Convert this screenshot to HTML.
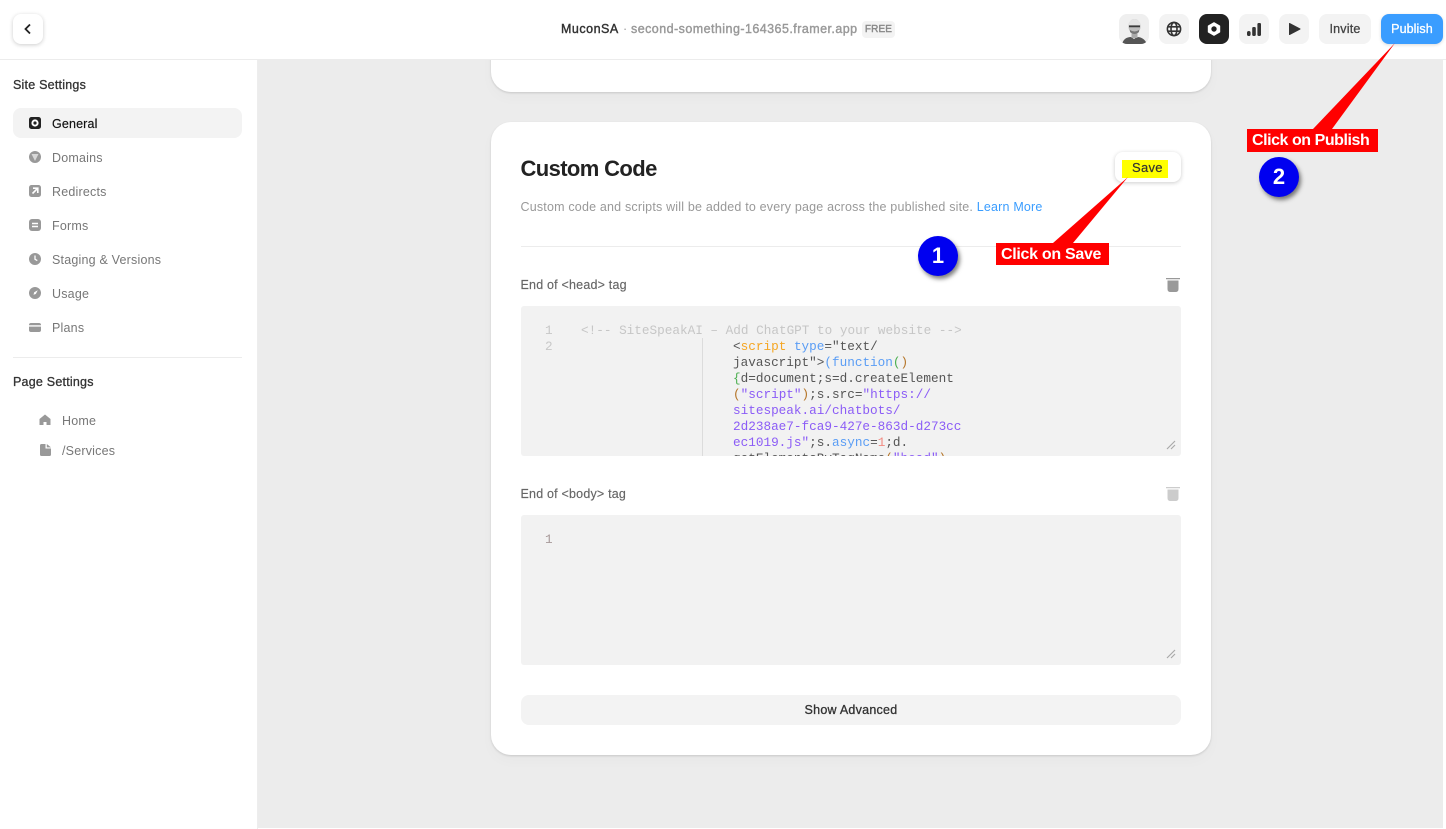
<!DOCTYPE html>
<html><head><meta charset="utf-8"><title>Site Settings</title>
<style>
html,body{margin:0;padding:0;width:1446px;height:829px;overflow:hidden;background:#fff;font-family:"Liberation Sans",sans-serif}
.a{position:absolute}
.t{position:absolute;white-space:nowrap;line-height:16px;font-size:12.5px;letter-spacing:.2px}
.md{-webkit-text-stroke:.3px currentColor}
.nav{color:#777}
.btn{position:absolute;top:14px;width:30px;height:30px;border-radius:8px;background:#f3f3f3}
.btn svg,.ic{position:absolute}
.card{position:absolute;left:491px;width:720px;background:#fff;border-radius:20px;box-shadow:0 1px 2px rgba(0,0,0,.14),0 6px 14px rgba(0,0,0,.025)}
.code{position:absolute;left:521px;width:660px;height:150px;background:#f2f2f2;border-radius:3px;overflow:hidden}
.m{position:absolute;font-family:"Liberation Mono",monospace;font-size:12.7px;line-height:16px;white-space:pre;color:#555}
.call{position:absolute;background:#f00;color:#fff;font-family:"Liberation Sans",sans-serif;font-weight:bold;font-size:16px;line-height:23px;white-space:nowrap}
.bub{position:absolute;width:40px;height:40px;border-radius:50%;background:#0000f0;color:#fff;text-align:center;font:bold 22px/40px "Liberation Sans",sans-serif;box-shadow:2px 3px 4px rgba(0,0,0,.5)}
.o{color:#f5a623}.b{color:#5a9df5}.p{color:#8b5cf6}.r{color:#f28b82}.g{color:#4caf50}.n{color:#b5762a}
</style></head><body>
<div class="a" style="left:258px;top:60px;width:1185px;height:768px;background:#ececec"></div>

<!-- header -->
<div class="a" style="left:0;top:0;width:1446px;height:59px;background:#fff;border-bottom:1px solid #ececec"></div>
<div class="a" style="left:13px;top:14px;width:30px;height:30px;border-radius:8px;background:#fff;box-shadow:0 1px 4px rgba(0,0,0,.2)"></div>
<svg class="a" style="left:22px;top:23px" width="12" height="12" viewBox="0 0 12 12"><path d="M8 1.500 3.500 6 8 10.500" fill="none" stroke="#222" stroke-width="1.800"/></svg>
<div class="t" style="left:561px;top:21px;color:#333;letter-spacing:.5px;-webkit-text-stroke:.4px #333">MuconSA</div>
<div class="t" style="left:623px;top:21px;color:#999">·</div>
<div class="t" style="left:631px;top:21px;color:#999;letter-spacing:.45px;-webkit-text-stroke:.4px #999">second-something-164365.framer.app</div>
<div class="a" style="left:862px;top:21px;width:33px;height:17px;border-radius:4px;background:#f3f3f3;color:#888;font-size:10px;line-height:17px;text-align:center;letter-spacing:.15px;-webkit-text-stroke:.4px #888">FREE</div>

<div class="btn" style="left:1119px;overflow:hidden;background:#efefef">
<svg width="30" height="30" viewBox="0 0 30 30" style="left:0;top:0"><path d="M3 30q2-7 9-7l3 2 3-2q7 0 10 7z" fill="#555"/><rect x="12.500" y="18" width="6" height="6" fill="#aaa"/><ellipse cx="15.500" cy="12.500" rx="6" ry="7.500" fill="#bdbdbd"/><path d="M10 11.500h11v1.800h-11z" fill="#3a3a3a"/><path d="M11 16q4.500 3 9 0v2q-4.500 4-9 0z" fill="#777"/><path d="M9.500 9q6-8 12 0l-.5 2H10z" fill="#e4e4e4"/></svg></div>
<div class="btn" style="left:1159px"><svg width="16" height="16" viewBox="0 0 16 16" style="left:7px;top:7px"><g fill="none" stroke="#333" stroke-width="1.600"><circle cx="8" cy="8" r="6.600"/><ellipse cx="8" cy="8" rx="3" ry="6.600"/><path d="M1.600 5.800h12.800M1.600 10.200h12.800"/></g></svg></div>
<div class="btn" style="left:1199px;background:#222"><svg width="18" height="18" viewBox="0 0 18 18" style="left:6px;top:6px"><path d="M9 2.800 14.600 6v6L9 15.200 3.400 12V6z" fill="#fff" stroke="#fff" stroke-width="1.200" stroke-linejoin="round"/><circle cx="9" cy="9" r="2.700" fill="#222"/></svg></div>
<div class="btn" style="left:1239px"><svg width="16" height="16" viewBox="0 0 16 16" style="left:7px;top:7px"><rect x="1" y="10" width="3.600" height="5" rx="1.800" fill="#333"/><rect x="6.200" y="6" width="3.600" height="9" rx="1.200" fill="#333"/><rect x="11.400" y="2" width="3.600" height="13" rx="1.200" fill="#333"/></svg></div>
<div class="btn" style="left:1279px"><svg width="16" height="16" viewBox="0 0 16 16" style="left:7px;top:7px"><path d="M3.500 2.500 14 8 3.500 13.500z" fill="#333" stroke="#333" stroke-width="1" stroke-linejoin="round"/></svg></div>
<div class="btn md" style="left:1319px;width:52px;color:#444;font-size:12.5px;line-height:31px;text-align:center;letter-spacing:.2px">Invite</div>
<div class="btn md" style="left:1381px;width:62px;background:#3a9dff;color:#fff;font-size:12.5px;line-height:31px;text-align:center;letter-spacing:.1px;box-shadow:0 1px 3px rgba(0,0,0,.15)">Publish</div>

<!-- sidebar -->
<div class="a" style="left:0;top:60px;width:257px;height:769px;background:#fff;border-right:1px solid #ededed"></div>
<div class="t md" style="left:13px;top:77px;color:#333;letter-spacing:.22px">Site Settings</div>
<div class="a" style="left:13px;top:108px;width:229px;height:30px;border-radius:8px;background:#f3f3f3"></div>

<svg class="ic" style="left:29px;top:117px" width="12" height="12" viewBox="0 0 12 12"><rect width="12" height="12" rx="2.500" fill="#222"/><circle cx="6" cy="6" r="3.600" fill="#fff"/><circle cx="6" cy="6" r="1.600" fill="#222"/></svg>
<div class="t" style="left:52px;top:116px;color:#111;letter-spacing:.15px;-webkit-text-stroke:.15px #111">General</div>
<svg class="ic" style="left:29px;top:151px" width="12" height="12" viewBox="0 0 12 12"><circle cx="6" cy="6" r="6" fill="#999"/><path d="M2.500 3h7L8 6 6 10 4 6z" fill="#d8d8d8"/></svg>
<div class="t nav" style="left:52px;top:150px">Domains</div>
<svg class="ic" style="left:29px;top:185px" width="12" height="12" viewBox="0 0 12 12"><rect width="12" height="12" rx="2.500" fill="#999"/><path d="M4 3.200h4.800V8M8.400 3.600 3.500 8.500" fill="none" stroke="#fff" stroke-width="1.600"/></svg>
<div class="t nav" style="left:52px;top:184px">Redirects</div>
<svg class="ic" style="left:29px;top:219px" width="12" height="12" viewBox="0 0 12 12"><rect width="12" height="12" rx="3" fill="#999"/><path d="M3 4.500h6M3 7.500h6" stroke="#fff" stroke-width="1.500"/></svg>
<div class="t nav" style="left:52px;top:218px">Forms</div>
<svg class="ic" style="left:29px;top:253px" width="12" height="12" viewBox="0 0 12 12"><circle cx="6" cy="6" r="6" fill="#999"/><path d="M6 2.500V6.300L8.300 7.600" fill="none" stroke="#fff" stroke-width="1.300"/></svg>
<div class="t nav" style="left:52px;top:252px">Staging &amp; Versions</div>
<svg class="ic" style="left:29px;top:287px" width="12" height="12" viewBox="0 0 12 12"><circle cx="6" cy="6" r="6" fill="#999"/><path d="M8.800 3.200 6.800 7 4.500 7.700 5.200 5.200z" fill="#fff"/></svg>
<div class="t nav" style="left:52px;top:286px">Usage</div>
<svg class="ic" style="left:29px;top:322px" width="12" height="11" viewBox="0 0 12 11"><path d="M0 3Q0 1 2 1h8q2 0 2 2v.300H0zM0 4.600h12V8q0 2-2 2H2q-2 0-2-2z" fill="#999"/></svg>
<div class="t nav" style="left:52px;top:320px">Plans</div>
<div class="a" style="left:13px;top:357px;width:229px;height:1px;background:#ececec"></div>
<div class="t md" style="left:13px;top:374px;color:#333;letter-spacing:.22px">Page Settings</div>
<svg class="ic" style="left:39px;top:414px" width="12" height="11" viewBox="0 0 12 11"><path d="M6 0.500 11.500 5V11H7.500V8h-3v3H.500V5z" fill="#999"/></svg>
<div class="t nav" style="left:62px;top:413px">Home</div>
<svg class="ic" style="left:40px;top:444px" width="11" height="12" viewBox="0 0 11 12"><path d="M1.500 0H5.500V4.500H11V10.500Q11 12 9.500 12H1.500Q0 12 0 10.500V1.500Q0 0 1.500 0ZM6.800 0 11 3.400H6.800Z" fill="#999"/></svg>
<div class="t nav" style="left:62px;top:443px">/Services</div>

<!-- cards -->
<div class="a" style="left:258px;top:60px;width:1185px;height:769px;overflow:hidden">
<div class="card" style="left:233px;top:-60px;height:92px"></div>
</div>
<div class="card" style="top:122px;height:633px"></div>
<div class="t" style="left:520.500px;top:156.500px;font-size:22px;line-height:24px;font-weight:bold;color:#222;letter-spacing:-.62px">Custom Code</div>
<div class="a" style="left:1115px;top:152px;width:66px;height:30px;border-radius:8px;background:#fff;box-shadow:0 1px 4px rgba(0,0,0,.2)"></div>
<div class="a" style="left:1122px;top:160px;width:46px;height:18px;background:#ff0"></div>
<div class="t" style="left:1132px;top:160px;color:#333;font-size:13px;letter-spacing:.3px;-webkit-text-stroke:.2px #333">Save</div>
<div class="t" style="left:520.500px;top:199px;color:#999;letter-spacing:.19px">Custom code and scripts will be added to every page across the published site. <span style="color:#3a9dff">Learn More</span></div>
<div class="a" style="left:521px;top:246px;width:660px;height:1px;background:#ececec"></div>

<div class="t" style="left:520.500px;top:277px;color:#666;letter-spacing:.2px;-webkit-text-stroke:.15px #666">End of &lt;head&gt; tag</div>
<svg class="ic" style="left:1166px;top:278px" width="14" height="14" viewBox="0 0 14 14"><path d="M0 0h14v1.300H0zM1.500 2.500h11V11q0 3-3 3h-5q-3 0-3-3z" fill="#999"/></svg>
<div class="code" style="top:306px">
<div class="m" style="left:24px;top:17px;color:#c8c8c8;width:20px">1</div>
<div class="m" style="left:24px;top:33px;color:#c8c8c8;width:20px">2</div>
<div class="m" style="left:60px;top:17px;color:#c6c6c6">&lt;!-- SiteSpeakAI – Add ChatGPT to your website --&gt;</div>
<div class="a" style="left:181px;top:32px;width:1px;height:118px;background:#dcdcdc"></div>
<div class="m" style="left:212px;top:33px">&lt;<span class="o">script</span> <span class="b">type</span>="text/
javascript"&gt;<span class="b">(function</span><span class="g">(</span><span class="n">)</span>
<span class="g">{</span>d=document;s=d.createElement
<span class="n">(</span><span class="p">"script"</span><span class="n">)</span>;s.src=<span class="p">"https://
sitespeak.ai/chatbots/
2d238ae7-fca9-427e-863d-d273cc
ec1019.js"</span>;s.<span class="b">async</span>=<span class="r">1</span>;d.
getElementsByTagName<span class="n">(</span><span class="p">"head"</span><span class="n">)</span></div>
<svg class="a" style="left:645px;top:134px" width="10" height="10" viewBox="0 0 10 10"><path d="M1 9 9 1M5 9 9 5" stroke="#aaa" stroke-width="1.200"/></svg>
</div>

<div class="t" style="left:520.500px;top:486px;color:#666;letter-spacing:.2px;-webkit-text-stroke:.15px #666">End of &lt;body&gt; tag</div>
<svg class="ic" style="left:1166px;top:487px" width="14" height="14" viewBox="0 0 14 14"><path d="M0 0h14v1.300H0zM1.500 2.500h11V11q0 3-3 3h-5q-3 0-3-3z" fill="#ccc"/></svg>
<div class="code" style="top:515px">
<div class="m" style="left:24px;top:17px;color:#a89a9a;width:20px">1</div>
<svg class="a" style="left:645px;top:134px" width="10" height="10" viewBox="0 0 10 10"><path d="M1 9 9 1M5 9 9 5" stroke="#aaa" stroke-width="1.200"/></svg>
</div>
<div class="a md" style="left:521px;top:695px;width:660px;height:30px;border-radius:8px;background:#f3f3f3;color:#333;font-size:12.5px;line-height:30px;text-align:center;letter-spacing:.25px">Show Advanced</div>

<!-- callouts -->
<svg class="a" style="left:0;top:0;pointer-events:none" width="1446" height="829"><path d="M1128 177 1053 243H1073Z" fill="#f00"/><path d="M1395 43 1313 129H1332Z" fill="#f00"/></svg>
<div class="call" style="left:996px;top:243px;width:108px;height:22px;padding-left:5px;letter-spacing:-.3px">Click on Save</div>
<div class="call" style="left:1247px;top:129px;width:126px;height:23px;padding-left:5px;letter-spacing:-.45px">Click on Publish</div>
<div class="bub" style="left:918px;top:236px">1</div>
<div class="bub" style="left:1259px;top:157px">2</div>
</body></html>
